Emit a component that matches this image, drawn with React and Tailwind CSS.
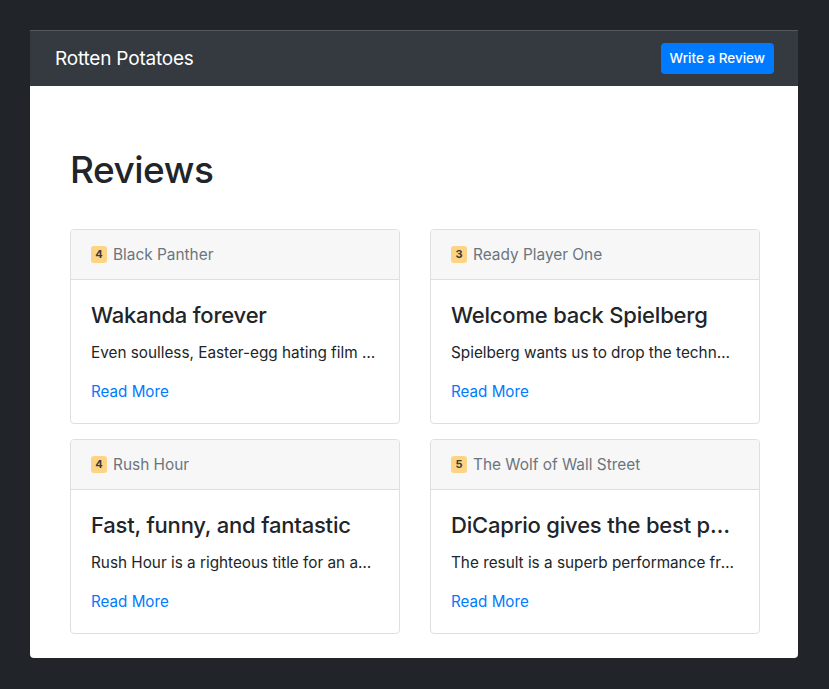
const REVIEWS = [
  { rating: 4, movie: 'Black Panther', title: 'Wakanda forever', text: 'Even soulless, Easter-egg hating film critics will love this movie' },
  { rating: 3, movie: 'Ready Player One', title: 'Welcome back Spielberg', text: 'Spielberg wants us to drop the technology and go outside' },
  { rating: 4, movie: 'Rush Hour', title: 'Fast, funny, and fantastic', text: 'Rush Hour is a righteous title for an action comedy' },
  { rating: 5, movie: 'The Wolf of Wall Street', title: 'DiCaprio gives the best performance of his career', text: 'The result is a superb performance from everyone involved' },
];

function ReviewCard({ r }) {
  return (
    <div className="border border-[#dfdfdf] rounded-[4px] bg-white overflow-hidden">
      <div className="h-[50px] bg-[#f7f7f7] border-b border-[#dfdfdf] flex items-center px-5">
        <span className="w-4 h-[17px] rounded-[3px] bg-[#fdd484] text-[#3a3a3a] text-[11px] font-bold flex items-center justify-center mr-[6px]">
          {r.rating}
        </span>
        <span className="text-[15.4px] text-[#6c757d]">{r.movie}</span>
      </div>
      <div className="px-5 pt-[21px] pb-[19px]">
        <h4 className="text-[22px] leading-[28px] font-medium text-[#212529] truncate tracking-[-0.2px]">{r.title}</h4>
        <p className="text-[15.3px] leading-6 text-[#212529] mt-3 truncate">{r.text}</p>
        <a className="block text-[15.2px] leading-6 text-[#007bff] mt-[15px]">Read More</a>
      </div>
    </div>
  );
}

export default function App() {
  return (
    <div className="min-h-[689px] bg-[#212529] pt-[30px] px-[30px] pb-[31px]" style={{ fontFamily: 'Inter, "Noto Sans", sans-serif' }}>
      <div className="w-[768px] rounded-b-[4px] overflow-hidden bg-white">
        <nav className="h-[56px] bg-[#343a40] border-t border-[#555a5f] flex items-center justify-between pl-[25px] pr-[24px]">
          <span className="text-[19px] text-white tracking-[-0.2px] mt-[2px]">Rotten Potatoes</span>
          <button className="h-[31px] px-[9px] rounded-[4px] bg-[#007bff] text-white text-[13.5px] font-medium">Write a Review</button>
        </nav>
        <main className="pl-10 pr-[38px] pt-[58px] pb-6">
          <h1 className="text-[37px] leading-[52px] font-medium text-[#212529] tracking-[-0.5px]">Reviews</h1>
          <div className="grid grid-cols-2 gap-x-[30px] gap-y-[15px] mt-[33px]">
            {REVIEWS.map(r => <ReviewCard key={r.movie} r={r} />)}
          </div>
        </main>
      </div>
    </div>
  );
}
